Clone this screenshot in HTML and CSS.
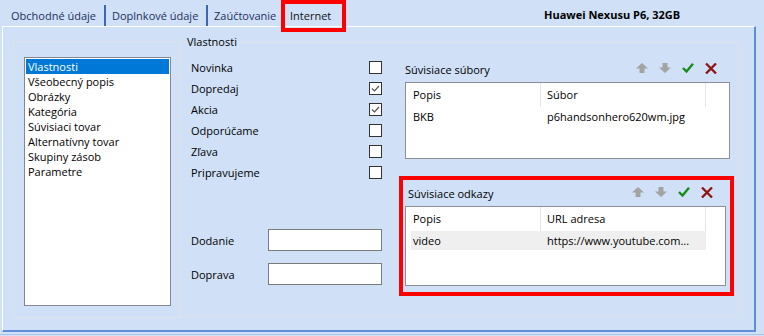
FILE: index.html
```html
<!DOCTYPE html>
<html lang="sk">
<head>
  <meta charset="UTF-8" />
  <title>Internet</title>
  <link rel="stylesheet" href="styles.css">
</head>
<body>
  <div class="tabbar">
    <div class="tab t1">Obchodné údaje</div>
    <div class="tab t2">Doplnkové údaje</div>
    <div class="tab t3">Zaúčtovanie</div>
    <div class="tab t4 active">Internet</div>
    <div class="product">Huawei Nexusu P6, 32GB</div>
  </div>

  <div class="panel">
    <div class="group nav-group">
      <ul class="listbox">
        <li class="selected">Vlastnosti</li>
        <li>Všeobecný popis</li>
        <li>Obrázky</li>
        <li>Kategória</li>
        <li>Súvisiaci tovar</li>
        <li>Alternatívny tovar</li>
        <li>Skupiny zásob</li>
        <li>Parametre</li>
      </ul>
    </div>

    <fieldset class="props">
      <legend>Vlastnosti</legend>
      <div class="props-body">
        <div class="flags">
          <label class="flag"><span>Novinka</span><i class="box"></i></label>
          <label class="flag"><span>Dopredaj</span><i class="box checked"><svg viewBox="0 0 13 13"><polyline points="3,6.5 5.5,9 10,4"/></svg></i></label>
          <label class="flag"><span>Akcia</span><i class="box checked"><svg viewBox="0 0 13 13"><polyline points="3,6.5 5.5,9 10,4"/></svg></i></label>
          <label class="flag"><span>Odporúčame</span><i class="box"></i></label>
          <label class="flag"><span>Zľava</span><i class="box"></i></label>
          <label class="flag"><span>Pripravujeme</span><i class="box"></i></label>

          <div class="fields">
            <div class="field"><span class="field-label">Dodanie</span><input type="text"></div>
            <div class="field"><span class="field-label">Doprava</span><input type="text"></div>
          </div>
        </div>

        <div class="related">
          <div class="section files">
            <div class="section-head">
              <span class="section-title">Súvisiace súbory</span>
              <div class="tools">
                <svg class="ico up" viewBox="0 0 12 10"><path d="M6 0 L12 5.5 H8.5 V10 H3.5 V5.5 H0 Z"/></svg>
                <svg class="ico down" viewBox="0 0 12 10"><path d="M6 10 L12 4.5 H8.5 V0 H3.5 V4.5 H0 Z"/></svg>
                <svg class="ico ok" viewBox="0 0 12 10"><polyline points="1,5 4.5,8.5 11,0.8"/></svg>
                <svg class="ico del" viewBox="0 0 12 11"><path d="M1 0.5 L11 10.5 M11 0.5 L1 10.5"/></svg>
              </div>
            </div>
            <div class="grid">
              <div class="grid-row head"><div class="cell">Popis</div><div class="cell">Súbor</div></div>
              <div class="grid-row"><div class="cell">BKB</div><div class="cell">p6handsonhero620wm.jpg</div></div>
            </div>
          </div>

          <div class="section links">
            <div class="section-head">
              <span class="section-title">Súvisiace odkazy</span>
              <div class="tools">
                <svg class="ico up" viewBox="0 0 12 10"><path d="M6 0 L12 5.5 H8.5 V10 H3.5 V5.5 H0 Z"/></svg>
                <svg class="ico down" viewBox="0 0 12 10"><path d="M6 10 L12 4.5 H8.5 V0 H3.5 V4.5 H0 Z"/></svg>
                <svg class="ico ok" viewBox="0 0 12 10"><polyline points="1,5 4.5,8.5 11,0.8"/></svg>
                <svg class="ico del" viewBox="0 0 12 11"><path d="M1 0.5 L11 10.5 M11 0.5 L1 10.5"/></svg>
              </div>
            </div>
            <div class="grid tall">
              <div class="grid-row head"><div class="cell">Popis</div><div class="cell">URL adresa</div></div>
              <div class="grid-row current"><div class="cell">video</div><div class="cell">https://www.youtube.com...</div></div>
            </div>
          </div>
        </div>
      </div>
    </fieldset>
  </div>
  <div class="bottom-line"></div>
</body>
</html>
```

FILE: styles.css
```css
body {
  margin: 0;
  background: #cfe0f7;
  font-family: "Open Sans", sans-serif;
  font-size: 11px;
  color: #000;
}

/* tabs */
.tabbar {
  display: flex;
  align-items: flex-end;
  height: 26px;
  padding-left: 5px;
}

.tab {
  position: relative;
  box-sizing: border-box;
  height: 21px;
  line-height: 21px;
  padding-left: 6px;
  border-right: 2px solid #4166b0;
  color: #23305e;
  white-space: nowrap;
}

.t1 { width: 101px; }
.t2 { width: 102px; }
.t3 { width: 77px; }
.t4 { width: 59px; padding-left: 5px; }

.tab.active {
  color: #111;
}

.tab.active::after {
  content: "";
  position: absolute;
  left: -4px;
  right: -4px;
  top: -5px;
  bottom: -6px;
  border: 4px solid #ff0000;
}

.product {
  margin-left: 200px;
  align-self: center;
  font-weight: bold;
  padding-top: 2px;
  white-space: nowrap;
}

/* main panel */
.panel {
  display: flex;
  align-items: flex-start;
  margin-left: 2px;
  width: 751px;
  height: 303px;
  border-top: 1px solid #fff;
  border-left: 1px solid #fff;
  border-right: 2px solid #5e8ed9;
  border-bottom: 2px solid #5e8ed9;
}

.bottom-line {
  margin-top: 2px;
  height: 1px;
  background: #a9c3ea;
}

.group {
  border: 1px solid #dde2e9;
}

.nav-group {
  margin: 14px 0 0 10px;
  padding: 15px 8px 11px 10px;
}

.listbox {
  list-style: none;
  margin: 0;
  padding: 1px;
  width: 143px;
  height: 245px;
  background: #fff;
  border: 1px solid #828790;
}

.listbox li {
  height: 15px;
  line-height: 15px;
  padding-left: 2px;
}

.listbox li.selected {
  background: #0078d7;
  color: #fff;
}

/* properties group */
.props {
  margin: 8px 0 0 -1px;
  padding: 0 4px 20px 11px;
  border: 1px solid #dde2e9;
  min-width: 0;
}

.props legend {
  margin-left: -5px;
  padding: 0 1px;
  line-height: 14px;
}

.props-body {
  display: flex;
  align-items: flex-start;
  gap: 17px;
}

.flags {
  width: 191px;
  padding-top: 8px;
}

.flag {
  display: flex;
  align-items: center;
  justify-content: space-between;
  height: 21px;
}

.box {
  width: 11px;
  height: 11px;
  border: 1px solid #333;
  background: #fff;
}

.box svg {
  display: block;
  width: 13px;
  height: 13px;
  margin: -1px;
  fill: none;
  stroke: #555;
  stroke-width: 1.2;
}

.fields {
  margin-top: 46px;
  display: flex;
  flex-direction: column;
  gap: 12px;
}

.field {
  display: flex;
  align-items: center;
}

.field-label {
  width: 44px;
  margin-right: 33px;
  white-space: nowrap;
}

.field input {
  width: 112px;
  height: 20px;
  margin: 0;
  padding: 0;
  border: 1px solid #7a7a7a;
  background: #fff;
  box-sizing: content-box;
}

/* related files / links */
.related {
  width: 335px;
}

.section {
  padding: 0 4px 0 6px;
}

.files {
  margin-top: 12px;
}

.links {
  margin-top: 17px;
  padding: 5px 4px 6px 2px;
  border: 4px solid #ff0000;
}

.section-head {
  display: flex;
  align-items: center;
  justify-content: space-between;
  height: 16px;
  padding-right: 13px;
  margin-bottom: 5px;
}

.links .section-title {
  padding-left: 3px;
}

.tools {
  display: flex;
  align-items: center;
  gap: 11px;
  margin-top: -2px;
}

.ico {
  width: 12px;
  height: 10px;
  display: block;
}

.ico.up,
.ico.down {
  fill: #a3a3a3;
}

.ico.ok {
  fill: none;
  stroke: #1b8a1b;
  stroke-width: 2.4;
}

.ico.del {
  height: 11px;
  fill: none;
  stroke: #8e1414;
  stroke-width: 2.3;
}

.grid {
  height: 75px;
  padding-left: 5px;
  background: #fff;
  border: 1px solid #8b8f96;
}

.grid.tall {
  height: 78px;
}

.grid-row {
  display: grid;
  grid-template-columns: 130px 165px;
  width: 295px;
  height: 19px;
  line-height: 19px;
}

.grid-row.head {
  height: 24px;
  line-height: 24px;
}

.grid-row.head .cell {
  border-right: 1px solid #e4e4e4;
}

.grid-row.current {
  background: #efefef;
}

.cell {
  padding-left: 2px;
  white-space: nowrap;
  overflow: hidden;
}

.cell + .cell {
  padding-left: 6px;
}
```
